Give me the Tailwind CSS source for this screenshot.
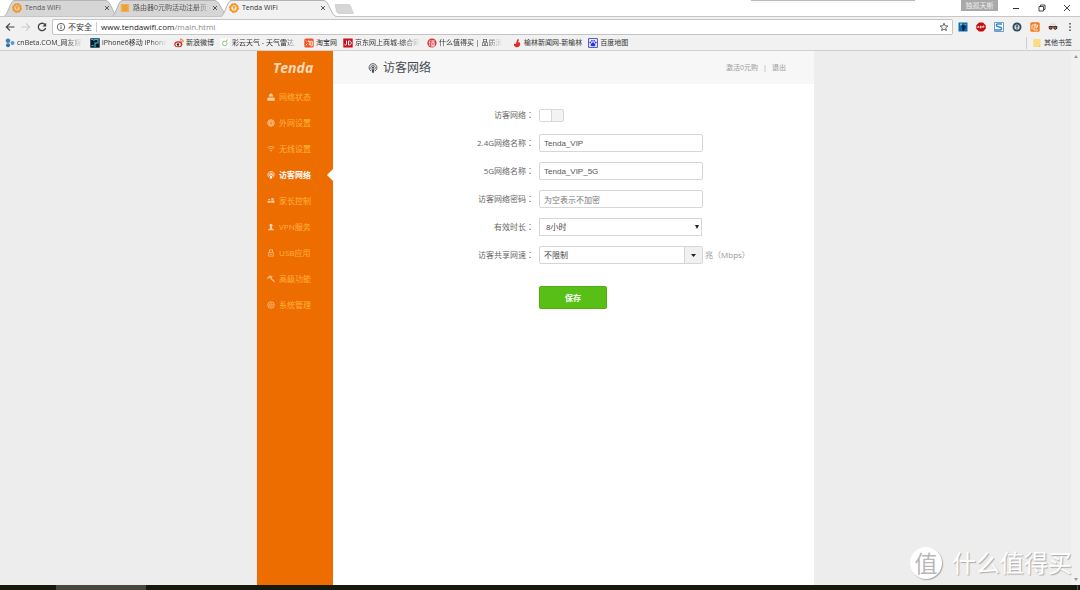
<!DOCTYPE html>
<html lang="zh-CN">
<head>
<meta charset="utf-8">
<meta name="viewport" content="width=device-width, initial-scale=1">
<title>Tenda WiFi</title>
<script src="https://cdn.jsdelivr.net/npm/@tailwindcss/browser@4"></script>
</head>
<body class="flex h-screen flex-col overflow-hidden bg-white font-['Open_Sans','Noto_Sans_CJK_SC',sans-serif] text-[8px] leading-3 text-[#555]">

<svg class="hidden" aria-hidden="true">
  <symbol id="tenda" viewBox="0 0 10 10"><circle cx="5" cy="5" r="3.6" fill="none" stroke="#f7941d" stroke-width="1.8"/><circle cx="5" cy="5" r="4.4" fill="none" stroke="#f7941d" stroke-width="1" stroke-dasharray="2 1.4"/><path d="M3.4 3.8h3.2M5 3.8v2.9" stroke="#f7941d" stroke-width="1.2"/></symbol>
  <symbol id="close" viewBox="0 0 6 6"><path d="M1 1l4 4M5 1L1 5" stroke="#555" stroke-width="1"/></symbol>
  <symbol id="guest" viewBox="0 0 12 12"><g fill="none" stroke="currentColor"><path d="M3.6 9.6A4.7 4.7 0 1 1 8.4 9.6" stroke-width="1.1"/><path d="M4 7.6A2.7 2.7 0 1 1 8 7.6" stroke-width="1"/></g><circle cx="6" cy="5.6" r="1.3" fill="currentColor"/><path d="M4.4 7.6h3.2l-.5 4H4.9z" fill="currentColor"/></symbol>
</svg>

<!-- tab strip -->
<header class="flex h-4 shrink-0 items-stretch pl-1">
  <div class="relative flex w-[114px] items-center">
    <svg class="absolute inset-0 size-full" viewBox="0 0 114 16" preserveAspectRatio="none"><path d="M0 16.5C4 15 6 1 10 .5H102C107 1 109 15 114 16.5" fill="#d6d6d6" stroke="#b4b4b4"/></svg>
    <svg class="relative ml-2 size-2.5"><use href="#tenda"/></svg>
    <span class="relative ml-[3px] flex-1 text-[7px]">Tenda WiFi</span>
    <button aria-label="关闭" class="relative mr-2"><svg class="size-1.5"><use href="#close"/></svg></button>
  </div>
  <div class="relative -ml-1.5 flex w-[116px] items-center">
    <svg class="absolute inset-0 size-full" viewBox="0 0 116 16" preserveAspectRatio="none"><path d="M0 16.5C4 15 6 1 10 .5H103C108 1 111 15 116 16.5" fill="#d6d6d6" stroke="#b4b4b4"/></svg>
    <svg class="relative ml-2 size-2.5" viewBox="0 0 10 10"><path d="M.8 1h8.4v8H.8z" fill="#f5b04a"/><path d="M2.4 3h5.2M2.4 5h5.2M2.4 7h5.2" stroke="#d98a1c" stroke-width=".8"/></svg>
    <span class="relative ml-[3px] min-w-0 flex-1 text-[7px] whitespace-nowrap [mask-image:linear-gradient(to_right,#000_80%,transparent)]">路由器0元购活动注册页</span>
    <button aria-label="关闭" class="relative mr-2.5"><svg class="size-1.5"><use href="#close"/></svg></button>
  </div>
  <div class="relative -ml-[7px] flex w-[115px] items-center">
    <svg class="absolute inset-x-0 top-0 h-[17px] w-full" viewBox="0 0 115 17" preserveAspectRatio="none"><path d="M0 16.5C4 15 6 1 10 .5H103C108 1 110 15 115 16.5V17H0z" fill="#f1f1f1"/><path d="M0 16.5C4 15 6 1 10 .5H103C108 1 110 15 115 16.5" fill="none" stroke="#b4b4b4"/></svg>
    <svg class="relative ml-2 size-2.5"><use href="#tenda"/></svg>
    <span class="relative ml-[3px] flex-1 text-[7px] text-[#333]">Tenda WiFi</span>
    <button aria-label="关闭" class="relative mr-2.5"><svg class="size-1.5"><use href="#close"/></svg></button>
  </div>
  <button aria-label="新标签页" class="mt-1 -ml-0.5 self-start"><svg class="h-2.5 w-5" viewBox="0 0 20 10"><path d="M1 .5h13.5c1.5 0 2 1 2.5 2.5L19.500 9.500H5C3.500 9.500 3 8.500 2.500 7z" fill="#d6d6d6" stroke="#c4c4c4" stroke-width=".6"/></svg></button>
  <div class="flex flex-1 justify-end pr-[46px]"><div class="h-px w-[164px] bg-[#bbb] shadow"></div></div>
  <div class="h-[11px] w-[37px] bg-[#a9a9a9] text-center text-[7px] leading-[11px] text-[#eee]">独孤天斯</div>
  <div class="flex w-[82px] items-center justify-between pr-[9px] pl-3.5 text-[#333]">
    <button aria-label="最小化"><svg class="size-2" viewBox="0 0 8 8"><path d="M1 4.500h6" stroke="currentColor"/></svg></button>
    <button aria-label="还原"><svg class="size-2" viewBox="0 0 8 8"><path d="M1 2.500h4.500V7H1zM2.500 2.500V1H7v4.500H5.500" fill="none" stroke="currentColor" stroke-width=".9"/></svg></button>
    <button aria-label="关闭窗口"><svg class="size-2" viewBox="0 0 8 8"><path d="M1 1l6 6M7 1L1 7" stroke="currentColor" stroke-width=".9"/></svg></button>
  </div>
</header>

<!-- address bar -->
<div class="flex h-[19px] shrink-0 items-center border-t border-[#c6c6c6] bg-[#f1f1f1] pt-0.5 pr-1.5 pl-[5px]">
  <nav class="flex w-[47px] shrink-0 gap-1.5 text-[#444]">
    <button aria-label="后退"><svg class="size-2.5" viewBox="0 0 10 10"><path d="M9.500 5H1.500M5 1.300L1.300 5 5 8.700" fill="none" stroke="currentColor" stroke-width="1.200"/></svg></button>
    <button aria-label="前进" class="text-[#ccc]"><svg class="size-2.5" viewBox="0 0 10 10"><path d="M.5 5h8M5 1.300L8.700 5 5 8.700" fill="none" stroke="currentColor" stroke-width="1.200"/></svg></button>
    <button aria-label="刷新"><svg class="size-2.5" viewBox="0 0 10 10"><path d="M8 2.700A3.700 3.700 0 1 0 8.600 6" fill="none" stroke="currentColor" stroke-width="1.300"/><path d="M9.200.7v3.800H5.400z" fill="currentColor"/></svg></button>
  </nav>
  <div class="flex h-4 flex-1 items-center rounded-xs border border-[#c4c4c4] bg-white px-[3px]">
    <svg class="size-2.5" viewBox="0 0 10 10"><circle cx="5" cy="5" r="3.700" fill="none" stroke="#555" stroke-width=".9"/><path d="M5 4.400v2.700M5 2.700v1" stroke="#555"/></svg>
    <span class="ml-0.5 w-[26px] text-[#333]">不安全</span>
    <span class="mr-1 ml-0.5 h-2.5 w-px bg-[#ccc]"></span>
    <a href="#" class="flex-1"><span class="text-[#222]">www.tendawifi.com</span><span class="text-[#888]">/main.html</span></a>
    <button aria-label="收藏"><svg class="size-2.5" viewBox="0 0 10 10"><path d="M5 1.200l1.100 2.600 2.800.2-2.200 1.800.7 2.800L5 7.100 2.600 8.600l.7-2.800L1.100 4l2.800-.2z" fill="none" stroke="#555" stroke-width=".9"/></svg></button>
  </div>
  <div class="ml-[5px] flex gap-2">
    <svg class="size-2.5" viewBox="0 0 10 10"><path d="M.5.500h9v9h-9z" fill="#1469a8"/><path d="M2 1.500h2v2H2z" fill="#6fc0ea"/><path d="M3.500 3h5L6 9H4.500z" fill="#0d2d50"/><path d="M6.500 2h2v1.500h-2z" fill="#4aa3dd"/></svg>
    <svg class="size-2.5" viewBox="0 0 10 10"><path d="M3 .5h4L9.700 3.200v3.600L7 9.500H3L.3 6.800V3.200z" fill="#c70d14"/><path d="M1.500 6l.8-2 .8 2M4.300 4v2h.8V4zM6.800 6V4h1.200v1H6.800" fill="none" stroke="#fff" stroke-width=".7"/></svg>
    <svg class="size-2.5" viewBox="0 0 10 10"><path d="M.5.500h9v9h-9z" fill="#fff" stroke="#4b88bd" stroke-width=".8"/><path d="M8 2H3.500C2 2 2 4.500 3.500 4.500L7 5.500c1 .5.500 2.500-.5 2.500H1" fill="none" stroke="#3b86c6" stroke-width="1.500"/></svg>
    <svg class="size-2.5" viewBox="0 0 10 10"><circle cx="5" cy="5" r="4.500" fill="#34495e"/><circle cx="5" cy="5" r="2.600" fill="#dfe6ea"/><path d="M5 3v4M3.700 4.200h2.600" stroke="#34495e"/></svg>
    <svg class="size-2.5" viewBox="0 0 10 10"><rect x=".3" y=".3" width="9.400" height="9.400" rx="1.500" fill="#f37a1f"/><path d="M2 7.500V3h5.500v2H4v3h4M5 1.500v3M6.500 5v1.500" fill="none" stroke="#fff" stroke-width=".8"/></svg>
    <svg class="size-2.5" viewBox="0 0 10 10"><path d="M2.500 1.500h5v2h-5z" fill="#ddd"/><path d="M.7 4.700h8.600" stroke="#422"/><circle cx="2.700" cy="5.800" r="1.500" fill="#a66" stroke="#3b1b1b" stroke-width="1"/><circle cx="7.300" cy="5.800" r="1.500" fill="#a66" stroke="#3b1b1b" stroke-width="1"/></svg>
    <button aria-label="菜单"><svg class="h-2.5 w-2" viewBox="0 0 8 10"><path d="M4 1v1.600M4 4.200v1.600M4 7.400V9" stroke="#555" stroke-width="1.600"/></svg></button>
  </div>
</div>

<!-- bookmarks -->
<nav class="flex h-4 shrink-0 items-center gap-1.5 border-b border-[#cfcfcf] bg-[#f1f1f1] pr-2 pl-[5px] text-[7px] whitespace-nowrap text-[#333]">
  <a href="#" class="flex w-[79px] items-center gap-0.5"><svg class="size-2.5 shrink-0" viewBox="0 0 10 10"><circle cx="3" cy="2.800" r="2.300" fill="#3f7fb5"/><circle cx="3" cy="7.300" r="2" fill="#2f6ea6"/><circle cx="7.500" cy="5" r="2" fill="#5a9acb"/></svg><span class="[mask-image:linear-gradient(to_right,#000_75%,transparent)]">cnBeta.COM_网友媒</span></a>
  <a href="#" class="flex w-[78px] items-center gap-0.5"><svg class="size-2.5 shrink-0" viewBox="0 0 10 10"><path d="M.3.300h9.400v9.400H.3z" fill="#0e1c24"/><path d="M1 1.500h2M4 3V1.500h4V5H5v4M1.500 7.500h2" fill="none" stroke="#31b5d8" stroke-width="1.200"/></svg><span class="[mask-image:linear-gradient(to_right,#000_75%,transparent)]">iPhone6移动 iPhone</span></a>
  <a href="#" class="flex items-center gap-0.5"><svg class="size-2.5 shrink-0" viewBox="0 0 10 10"><ellipse cx="4.300" cy="6.200" rx="4" ry="3" fill="#d9241b"/><ellipse cx="4.200" cy="6.400" rx="2.700" ry="1.900" fill="#fff"/><circle cx="4" cy="6.500" r="1.200" fill="#222"/><path d="M6 1.200c2-.4 3.500 1 3 3M6.300 2.700c1-.1 1.500.5 1.300 1.400" fill="none" stroke="#e0501c" stroke-width=".9"/></svg><span>新浪微博</span></a>
  <a href="#" class="flex w-[78px] items-center gap-0.5"><svg class="size-2.5 shrink-0" viewBox="0 0 10 10"><path d="M.3.300h9.400v9.400H.3z" fill="#fff"/><circle cx="4.800" cy="5.500" r="2.300" fill="none" stroke="#8ac28a" stroke-width="1"/><path d="M6 3l2-1.500" stroke="#e8aa4c"/></svg><span class="[mask-image:linear-gradient(to_right,#000_85%,transparent)]">彩云天气 - 天气雷达,</span></a>
  <a href="#" class="flex items-center gap-0.5"><svg class="size-2.5 shrink-0" viewBox="0 0 10 10"><rect x=".3" y=".5" width="9.400" height="9" rx="1.500" fill="#f4511e"/><path d="M1.700 2.500l1 .8M1.700 7.700l1.500-2.200M4.500 2.500L4 4M4.300 3.300h4v4.500H6.500M4.500 5h3M6 3.500v3.200M4.700 6.700h2.600" fill="none" stroke="#fff" stroke-width=".8"/></svg><span>淘宝网</span></a>
  <a href="#" class="flex w-[78px] items-center gap-0.5"><svg class="size-2.5 shrink-0" viewBox="0 0 10 10"><path d="M.3.500h9.400v9H.3z" fill="#c8101e"/><path d="M3.500 2.700v3.500c0 1-1.500 1.200-2 .4M5.500 3v4h1c2.300 0 2.300-4 0-4z" fill="none" stroke="#fff" stroke-width="1"/></svg><span class="[mask-image:linear-gradient(to_right,#000_75%,transparent)]">京东网上商城-综合网</span></a>
  <a href="#" class="flex w-[79px] items-center gap-0.5"><svg class="size-2.5 shrink-0" viewBox="0 0 10 10"><circle cx="5" cy="5" r="4.600" fill="#d8343a"/><path d="M3.300 2L2 5M2.800 4v4M4 3h4M6 2v2M4.700 4.500h2.600v3H4.700zM4.700 6h2.600M3.800 8.200h4.500" fill="none" stroke="#fff" stroke-width=".7"/></svg><span class="[mask-image:linear-gradient(to_right,#000_75%,transparent)]">什么值得买 | 品质消</span></a>
  <a href="#" class="flex items-center gap-0.5"><svg class="size-2.5 shrink-0" viewBox="0 0 10 10"><path d="M6 .800C7.500 2 6.800 3 5.800 4c2 0 2.700 1 2.400 2.600C7.800 8.500 6.500 9.300 4.500 9.200 2.500 9 1.500 7.500 2 5.500c1 .8 1.800.5 2.200-.5C4.800 3.500 4.700 2 6 .800z" fill="#e32a26"/></svg><span>榆林新闻网-新榆林</span></a>
  <a href="#" class="flex items-center gap-0.5"><svg class="size-2.5 shrink-0" viewBox="0 0 10 10"><path d="M.6.600h8.800v8.800H.6z" fill="#fff" stroke="#2b35d8" stroke-width=".9"/><g fill="#2b35d8"><circle cx="2.300" cy="4.500" r=".9"/><circle cx="3.900" cy="2.800" r=".9"/><circle cx="6.100" cy="2.800" r=".9"/><circle cx="7.700" cy="4.500" r=".9"/><path d="M5 4.300c1 0 2.500 2 2.500 3s-1.500 1-2.500 1-2.500 0-2.500-1 1.500-3 2.500-3z"/></g></svg><span>百度地图</span></a>
  <a href="#" class="ml-auto flex items-center gap-[3px] border-l border-[#ccc] pl-1.5"><svg class="size-2" viewBox="0 0 8 8"><path d="M.3 0h7.200v8H.3z" fill="#fbdc82"/><path d="M6 5.500L7.500 8H6z" fill="#eec65b"/></svg><span>其他书签</span></a>
</nav>

<!-- page viewport -->
<div class="flex min-h-0 flex-1 bg-[#ededed]">
  <div class="flex min-w-0 flex-1 justify-center">
    <div class="flex w-[52%] bg-white">
      <aside class="w-[76px] shrink-0 bg-[#ed6d00]">
        <a href="#" aria-label="Tenda" class="flex h-[33px] items-center justify-center pr-1 font-['Open_Sans',sans-serif] text-[14px] font-bold text-[#fbd9b9] italic"><span>Tenda</span></a>
        <ul class="text-[#ffb13d]">
          <li><a href="#" class="flex h-[26px] items-center gap-1 pl-2.5"><svg class="size-2 text-[#fbd0a5]" viewBox="0 0 8 8"><path d="M2 3.500C1.800-.5 6.200-.5 6 3.500zM.3 7.700V5.400c0-.8.500-1 1-1h5.400c.6 0 1 .3 1 1v2.300z" fill="currentColor"/></svg>网络状态</a></li>
          <li><a href="#" class="flex h-[26px] items-center gap-1 pl-2.5"><svg class="size-2 text-[#fbc08a]" viewBox="0 0 8 8"><g fill="none" stroke="currentColor" stroke-width=".8"><circle cx="4" cy="4" r="3.300"/><ellipse cx="4" cy="4" rx="1.500" ry="3.300"/><path d="M.7 4h6.600M1.200 2.300h5.600M1.200 5.700h5.600"/></g></svg>外网设置</a></li>
          <li><a href="#" class="flex h-[26px] items-center gap-1 pl-2.5"><svg class="size-2 text-[#fbb57a]" viewBox="0 0 8 8"><path d="M.6 2.700c2-1.700 4.800-1.700 6.800 0M1.800 4.200c1.300-1.100 3.100-1.100 4.400 0" fill="none" stroke="currentColor" stroke-width=".9"/><path d="M2.900 5.300c.7-.5 1.500-.5 2.200 0L4 7z" fill="currentColor"/></svg>无线设置</a></li>
          <li><a href="#" aria-current="page" class="flex h-[26px] items-center gap-1 pl-2.5 font-bold text-white"><svg class="size-2"><use href="#guest"/></svg>访客网络<svg class="ml-auto h-3 w-1.5" viewBox="0 0 6 12"><path d="M6 0v12L0 6z" fill="#fff"/></svg></a></li>
          <li><a href="#" class="flex h-[26px] items-center gap-1 pl-2.5"><svg class="size-2 text-[#fbd0a5]" viewBox="0 0 8 8"><path d="M4.300 1.300h2.500v1.500H4.300zM1.300 2h1.800v1.300H1.300zM.5 4h3.200v1.800H.5zM4.200 3.500h3.200v2.300H4.200z" fill="currentColor"/></svg>家长控制</a></li>
          <li><a href="#" class="flex h-[26px] items-center gap-1 pl-2.5"><svg class="size-2 text-[#fbd0a5]" viewBox="0 0 8 8"><circle cx="4" cy="2.300" r="1.500" fill="currentColor"/><path d="M3.300 3h1.400l.8 3.300h-3zM1 6.200h6v1H1z" fill="currentColor"/></svg>VPN服务</a></li>
          <li><a href="#" class="flex h-[26px] items-center gap-1 pl-2.5"><svg class="size-2 text-[#fbc08a]" viewBox="0 0 8 8"><path d="M2.500 3.300V.8h3v2.500M1.700 3.400h4.600v3.800H1.700zM3 5.300h2" fill="none" stroke="currentColor" stroke-width=".8"/></svg>USB应用</a></li>
          <li><a href="#" class="flex h-[26px] items-center gap-1 pl-2.5"><svg class="size-2 text-[#fbc08a]" viewBox="0 0 8 8"><path d="M.5 3.500L3 1.200l1.700.5L3.500 3l4 3.800" fill="none" stroke="currentColor" stroke-width="1.200"/></svg>高级功能</a></li>
          <li><a href="#" class="flex h-[26px] items-center gap-1 pl-2.5"><svg class="size-2 text-[#fbc08a]" viewBox="0 0 8 8"><circle cx="4" cy="4" r="3.200" fill="none" stroke="currentColor" stroke-width=".9"/><circle cx="4" cy="4" r="1.300" fill="none" stroke="currentColor" stroke-width=".8"/></svg>系统管理</a></li>
        </ul>
      </aside>
      <main class="min-w-0 flex-1">
        <div class="flex h-[33px] items-center justify-between bg-[#f7f7f7] pr-7 pl-[35px]">
          <h1 class="flex items-center gap-[5px] text-[12px] leading-4 text-[#444b52]"><svg class="size-2.5"><use href="#guest"/></svg>访客网络</h1>
          <div class="flex gap-[5px] text-[7px] text-[#999]"><a href="#">激活0元购</a><span>|</span><a href="#">退出</a></div>
        </div>
        <form class="grid grid-cols-[201px_1fr] items-center gap-x-[5px] gap-y-2.5 pt-[22px] text-[#666]" onsubmit="return false">
          <label for="guest-switch" class="text-right">访客网络<span lang="zh-TW" class="font-['Noto_Sans_CJK_TC',sans-serif]">：</span></label>
          <div class="flex h-[18px] items-center"><button id="guest-switch" type="button" role="switch" aria-checked="false" class="flex h-[13px] w-[25px] rounded-xs border border-[#d3d8de] bg-[#f3f3f4]"><span class="h-full w-3 border-r border-[#d3d8de] bg-white"></span></button></div>
          <label for="ssid24" class="text-right">2.4G网络名称<span lang="zh-TW" class="font-['Noto_Sans_CJK_TC',sans-serif]">：</span></label>
          <input id="ssid24" value="Tenda_VIP" class="h-[18px] w-[164px] rounded-xs border border-[#d6d6d6] px-1 font-['Liberation_Sans',sans-serif] text-[#555]">
          <label for="ssid5" class="text-right">5G网络名称<span lang="zh-TW" class="font-['Noto_Sans_CJK_TC',sans-serif]">：</span></label>
          <input id="ssid5" value="Tenda_VIP_5G" class="h-[18px] w-[164px] rounded-xs border border-[#d6d6d6] px-1 font-['Liberation_Sans',sans-serif] text-[#555]">
          <label for="pwd" class="text-right">访客网络密码<span lang="zh-TW" class="font-['Noto_Sans_CJK_TC',sans-serif]">：</span></label>
          <input id="pwd" placeholder="为空表示不加密" class="h-[18px] w-[164px] rounded-xs border border-[#d6d6d6] px-1 placeholder:text-[#777]">
          <label for="time" class="text-right">有效时长<span lang="zh-TW" class="font-['Noto_Sans_CJK_TC',sans-serif]">：</span></label>
          <div class="relative w-[163px]">
            <select id="time" class="block h-[18px] w-full appearance-none border border-[#d6d6d6] bg-white px-1.5 text-[#444]"><option>8小时</option></select>
            <svg class="pointer-events-none absolute top-1.5 right-[3px] h-1.5 w-1" viewBox="0 0 4 6"><path d="M0 1h4L2 5z" fill="#222"/></svg>
          </div>
          <label for="speed" class="text-right">访客共享网速<span lang="zh-TW" class="font-['Noto_Sans_CJK_TC',sans-serif]">：</span></label>
          <div class="flex items-center gap-0.5">
            <div class="flex h-[18px] w-[164px] overflow-hidden rounded-xs border border-[#d6d6d6]">
              <input id="speed" value="不限制" class="min-w-0 flex-1 px-1 text-[#444]">
              <button type="button" aria-label="选择网速" class="flex w-[18px] items-center justify-center border-l border-[#d6d6d6] bg-[#f1f1f1]"><svg class="h-[3px] w-[5px]" viewBox="0 0 5 3"><path d="M0 0h5L2.500 3z" fill="#222"/></svg></button>
            </div>
            <span lang="zh-TW" class="font-['Open_Sans','Noto_Sans_CJK_TC',sans-serif] text-[#999]">兆（Mbps）</span>
          </div>
          <button type="submit" class="col-start-2 mt-3 h-[23px] w-[68px] rounded-xs border border-[#4fae12] bg-[#57bf16] font-bold text-white">保存</button>
        </form>
      </main>
    </div>
  </div>
  <div class="flex w-[9px] shrink-0 flex-col items-center justify-between bg-[#f1f1f1] py-1">
    <svg class="h-[3px] w-1" viewBox="0 0 4 3"><path d="M0 3h4L2 0z" fill="#999"/></svg>
    <svg class="h-[3px] w-1" viewBox="0 0 4 3"><path d="M0 0h4L2 3z" fill="#999"/></svg>
  </div>
</div>

<!-- desktop taskbar edge -->
<footer class="flex h-[5px] shrink-0 justify-between bg-[#171a0a] pr-0.5 pl-14"><div class="w-[90px] bg-[#45483a]"></div><div class="w-px bg-[#55584a]"></div></footer>

<!-- watermark -->
<div class="pointer-events-none absolute right-2 bottom-[9px] flex items-center gap-2.5 text-[24px] leading-9 text-white">
  <span class="flex size-8 items-center justify-center rounded-full bg-white text-[23px] text-[#b8b8b8] shadow-[1px_1px_1px_#aaa]">值</span>
  <span class="[text-shadow:1px_1px_1px_#aaa]">什么值得买</span>
</div>
</body>
</html>
